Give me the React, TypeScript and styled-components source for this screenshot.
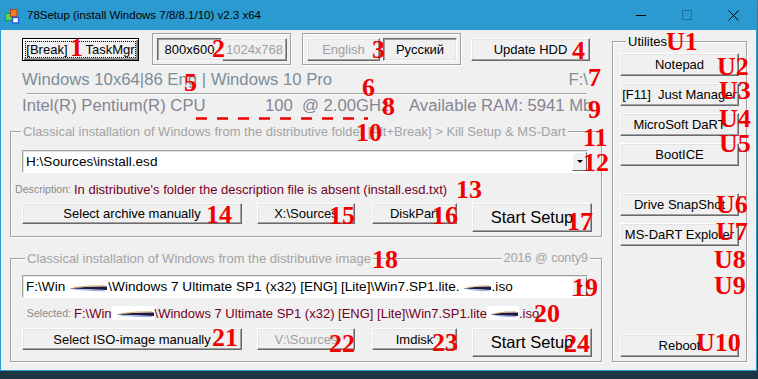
import React from 'react';
import styled, { createGlobalStyle, css } from 'styled-components';

const UI_FONT = `"Liberation Sans", Arial, sans-serif`;

const GlobalStyle = createGlobalStyle`
  html, body { margin: 0; padding: 0; }
  body {
    width: 758px;
    height: 379px;
    overflow: hidden;
    background: linear-gradient(180deg, #4a7890 0%, #1d3442 100%);
    font-family: ${UI_FONT};
  }
`;

const Screen = styled.div`
  position: relative;
  width: 758px;
  height: 379px;
`;

const Window = styled.div`
  width: 757px;
  height: 371px;
  box-sizing: border-box;
  border: 1px solid #2b9ad0;
  border-top: 0;
  background: #f0f0f0;
  display: flex;
  flex-direction: column;
`;

const TitleBar = styled.div`
  flex: none;
  height: 30px;
  display: flex;
  align-items: center;
  background: #2b9ad0;
`;

const AppIcon = styled.svg`
  flex: none;
  margin-left: 3px;
  margin-top: 1px;
`;

const TitleText = styled.div`
  flex: 1;
  margin-left: 7px;
  font-size: 11.5px;
  color: #000;
  white-space: nowrap;
`;

const CaptionButton = styled.div`
  flex: none;
  width: 46px;
  height: 30px;
  display: flex;
  align-items: center;
  justify-content: center;
`;

const Client = styled.div`
  flex: 1;
  display: flex;
  padding-left: 9px;
`;

const LeftCol = styled.div`
  width: 593px;
  display: flex;
  flex-direction: column;
`;

const RightCol = styled.div`
  width: 136px;
  margin-left: 9px;
  margin-top: 4px;
`;

const TopRow = styled.div`
  margin-top: 3px;
  height: 32px;
  padding-left: 12px;
  display: flex;
  align-items: center;
`;

const Cluster = styled.div<{ $ml: number; $gap: number }>`
  box-sizing: border-box;
  height: 32px;
  margin-left: ${p => p.$ml}px;
  padding: 0 3px 0 4px;
  display: flex;
  align-items: center;
  gap: ${p => p.$gap}px;
  border: 1px solid #a0a0a0;
  box-shadow: inset 1px 1px 0 #fff, 1px 1px 0 #fff;
`;

type Kind = 'normal' | 'default' | 'pressed' | 'disabled';

const kindStyles: Record<Kind, ReturnType<typeof css>> = {
  normal: css`
    border-color: #fff #696969 #696969 #fff;
    box-shadow: inset -1px -1px 0 #a0a0a0, inset 1px 1px 0 #e3e3e3;
  `,
  disabled: css`
    color: #a0a0a0;
    border-color: #fff #696969 #696969 #fff;
    box-shadow: inset -1px -1px 0 #a0a0a0, inset 1px 1px 0 #e3e3e3;
  `,
  pressed: css`
    border-color: #696969 #fff #fff #696969;
    box-shadow: inset 1px 1px 0 #a0a0a0, inset -1px -1px 0 #e3e3e3;
  `,
  default: css`
    border-color: #000;
    box-shadow: inset 1px 1px 0 #fff, inset -1px -1px 0 #696969, inset -2px -2px 0 #a0a0a0;
  `,
};

const Button = styled.button<{ $w: number; $h?: number; $kind?: Kind; $big?: boolean; $ml?: number; $mt?: number }>`
  box-sizing: border-box;
  flex: none;
  width: ${p => p.$w}px;
  height: ${p => p.$h ?? 23}px;
  margin: ${p => p.$mt ?? 0}px 0 0 ${p => p.$ml ?? 0}px;
  padding: 0;
  display: flex;
  align-items: center;
  justify-content: center;
  font-family: ${UI_FONT};
  font-size: ${p => (p.$big ? 16.5 : 13)}px;
  white-space: nowrap;
  background: #f0f0f0;
  color: #000;
  border: 1px solid;
  ${p => kindStyles[p.$kind ?? 'normal']}
`;

const FocusRing = styled.span`
  align-self: stretch;
  flex: 1;
  margin: 2px;
  border: 1px dotted #000;
  display: flex;
  align-items: center;
  justify-content: center;
`;

const InfoRow = styled.div`
  margin-top: 5px;
  height: 20px;
  padding: 0 15px 0 12px;
  display: flex;
  justify-content: space-between;
  align-items: center;
  font-size: 16.7px;
  color: #7b8e99;
  white-space: nowrap;
`;

const Separator = styled.div`
  margin: 3px 0 0 17px;
  width: 559px;
  height: 0;
  border-top: 1px solid #a0a0a0;
  border-bottom: 1px solid #fff;
`;

const CpuRow = styled.div`
  margin-top: 1px;
  height: 20px;
  padding-left: 12px;
  display: grid;
  grid-template-columns: 243px 37px 107px auto;
  align-items: center;
  font-size: 16.7px;
  color: #878591;
  white-space: nowrap;
`;

const Group = styled.fieldset<{ $mt: number; $pb: number }>`
  box-sizing: border-box;
  width: 592px;
  min-width: 0;
  margin: ${p => p.$mt}px 0 0 0;
  padding: 0 0 ${p => p.$pb}px 0;
  border: 1px solid #a0a0a0;
  box-shadow: inset 1px 1px 0 #fff, 1px 1px 0 #fff;
`;

const SideGroup = styled(Group)`
  width: 135px;
  padding: 0 0 4px 7px;
`;

const Legend = styled.legend<{ $ml: number; $dark?: boolean }>`
  margin-left: ${p => p.$ml}px;
  padding: 0 2px;
  height: 15px;
  line-height: 15px;
  font-size: 13px;
  color: ${p => (p.$dark ? '#000' : '#a3a3a3')};
  background: #f0f0f0;
  white-space: nowrap;
`;

const WideLegend = styled.legend`
  margin-left: 14px;
  padding: 0;
  width: 565px;
  height: 15px;
  display: flex;
  background: #f0f0f0;
`;

const LegendText = styled.span<{ $size: number }>`
  padding: 0 2px;
  line-height: 15px;
  font-size: ${p => p.$size}px;
  color: #a3a3a3;
  white-space: nowrap;
`;

const LegendRule = styled.span`
  flex: 1;
  margin-top: 7px;
  height: 0;
  border-top: 1px solid #a0a0a0;
  border-bottom: 1px solid #fff;
`;

const Combo = styled.div<{ $mt: number }>`
  box-sizing: border-box;
  margin: ${p => p.$mt}px 0 0 11px;
  width: 566px;
  height: 23px;
  display: flex;
  align-items: center;
  background: #fff;
  border: 1px solid;
  border-color: #a0a0a0 #fff #fff #a0a0a0;
  box-shadow: inset 1px 1px 0 #e3e3e3;
`;

const ComboText = styled.div`
  flex: 1;
  padding-left: 3px;
  display: flex;
  align-items: center;
  font-size: 13.6px;
  color: #000;
  white-space: nowrap;
  overflow: hidden;
`;

const DropButton = styled.div`
  flex: none;
  box-sizing: border-box;
  width: 15px;
  height: 19px;
  display: flex;
  align-items: center;
  justify-content: center;
  background: #f0f0f0;
  border: 1px solid;
  border-color: #fff #696969 #696969 #fff;
`;

const Arrow = styled.span`
  width: 0;
  height: 0;
  border-left: 3px solid transparent;
  border-right: 3px solid transparent;
  border-top: 3px solid #000;
`;

const NoteRow = styled.div<{ $mt: number }>`
  margin-top: ${p => p.$mt}px;
  height: 16px;
  display: flex;
  align-items: center;
  gap: 3px;
  white-space: nowrap;
`;

const NoteLabel = styled.span`
  width: 60px;
  text-align: right;
  font-size: 10.6px;
  color: #8a8a8a;
`;

const NoteValue = styled.span`
  display: flex;
  align-items: center;
  font-size: 13px;
  color: #74001f;
`;

const ButtonRow = styled.div<{ $mt: number }>`
  margin: ${p => p.$mt}px 0 0 11px;
  display: flex;
  align-items: flex-start;
`;

const SmudgeSvg = styled.svg`
  flex: none;
  display: block;
`;

const Overlay = styled.div`
  position: absolute;
  inset: 0;
  pointer-events: none;
`;

const Mark = styled.span<{ $x: number; $y: number }>`
  position: absolute;
  left: ${p => p.$x - 1}px;
  top: ${p => p.$y - 4}px;
  font-family: "Liberation Serif", "Times New Roman", serif;
  font-weight: bold;
  font-size: 26px;
  line-height: 1;
  color: #f00000;
  white-space: nowrap;
`;

const DashLine = styled.svg`
  position: absolute;
  left: 196px;
  top: 116px;
`;

const marks: [string, number, number][] = [
  ['1', 71, 39], ['2', 213, 40], ['3', 373, 41], ['4', 573, 42],
  ['5', 185, 74], ['6', 363, 79], ['7', 589, 69], ['8', 383, 98], ['9', 589, 101],
  ['10', 357, 124], ['11', 584, 129], ['12', 584, 154], ['13', 457, 181],
  ['14', 207, 206], ['15', 330, 207], ['16', 433, 207], ['17', 568, 213],
  ['18', 373, 251], ['19', 573, 279], ['20', 535, 305], ['21', 213, 329],
  ['22', 330, 335], ['23', 433, 334], ['24', 565, 335],
  ['U1', 667, 33], ['U2', 718, 58], ['U3', 720, 82], ['U4', 720, 110], ['U5', 720, 135],
  ['U6', 717, 196], ['U7', 717, 223], ['U8', 715, 251], ['U9', 715, 277], ['U10', 697, 334],
];

function Smudge({ w }: { w: number }) {
  const s = Math.round(w * 0.12);
  return (
    <SmudgeSvg width={w} height={14} viewBox={`0 0 ${w} 14`}>
      <rect width={w} height={14} fill="#fff" />
      <path d={`M${s} 8.2 Q ${w * 0.55} 6.2 ${w - 1} 6.6 L ${w - 1} 10 Q ${w * 0.55} 9.6 ${s} 8.6 Z`} fill="#1b1b48" />
      <path d={`M${s + 4} 7.6 Q ${w * 0.55} 5.4 ${w - 3} 5.8`} stroke="#d08a3a" strokeWidth="0.9" fill="none" opacity="0.8" />
      <path d={`M${s + 4} 9.2 Q ${w * 0.55} 10.6 ${w - 3} 10.8`} stroke="#5f8fd8" strokeWidth="0.9" fill="none" opacity="0.8" />
    </SmudgeSvg>
  );
}

function TitleIcon() {
  return (
    <AppIcon width="16" height="16" viewBox="0 0 16 16">
      <rect x="1.5" y="5.5" width="6.5" height="7" fill="#5fd35f" stroke="#1f9a2a" />
      <rect x="6.5" y="1.5" width="6.5" height="7" fill="#f07a28" stroke="#a8481a" />
      <rect x="8.5" y="9.5" width="6" height="5.5" fill="#fff" stroke="#1f5fe0" strokeWidth="1.4" />
    </AppIcon>
  );
}

function Caption() {
  return (
    <TitleBar>
      <TitleIcon />
      <TitleText>78Setup (install Windows 7/8/8.1/10) v2.3 x64</TitleText>
      <CaptionButton>
        <svg width="10" height="10" viewBox="0 0 10 10">
          <line x1="0" y1="5.5" x2="10" y2="5.5" stroke="#000" strokeWidth="1" />
        </svg>
      </CaptionButton>
      <CaptionButton>
        <svg width="10" height="10" viewBox="0 0 10 10">
          <rect x="0.5" y="0.5" width="9" height="9" fill="none" stroke="#1d6f9c" strokeWidth="1" />
        </svg>
      </CaptionButton>
      <CaptionButton>
        <svg width="11" height="11" viewBox="0 0 11 11">
          <path d="M0.5 0.5 L10.5 10.5 M10.5 0.5 L0.5 10.5" stroke="#000" strokeWidth="1" />
        </svg>
      </CaptionButton>
    </TitleBar>
  );
}

export default function App() {
  return (
    <Screen>
      <GlobalStyle />
      <Window>
        <Caption />
        <Client>
          <LeftCol>
            <TopRow>
              <Button $w={117} $kind="default">
                <FocusRing>[Break]{'\u00a0'.repeat(5)}TaskMgr</FocusRing>
              </Button>
              <Cluster $ml={13} $gap={0}>
                <Button $w={65} $kind="pressed">800x600</Button>
                <Button $w={65} $kind="disabled">1024x768</Button>
              </Cluster>
              <Cluster $ml={11} $gap={3}>
                <Button $w={73} $kind="disabled">English</Button>
                <Button $w={74} $kind="pressed">Русский</Button>
              </Cluster>
              <Button $w={119} $ml={10}>Update HDD</Button>
            </TopRow>

            <InfoRow>
              <span>Windows 10x64|86 Eng | Windows 10 Pro</span>
              <span>F:\</span>
            </InfoRow>
            <Separator />
            <CpuRow>
              <span>Intel(R) Pentium(R) CPU</span>
              <span>100</span>
              <span>@ 2.00GHz</span>
              <span>Available RAM: 5941 Mb</span>
            </CpuRow>

            <Group $mt={8} $pb={4}>
              <Legend $ml={10}>
                Classical installation of Windows from the distributive folder [Alt+Break] &gt; Kill Setup &amp; MS-Dart
              </Legend>
              <Combo $mt={11}>
                <ComboText>H:\Sources\install.esd</ComboText>
                <DropButton><Arrow /></DropButton>
              </Combo>
              <NoteRow $mt={8}>
                <NoteLabel>Description:</NoteLabel>
                <NoteValue>In distributive's folder the description file is absent (install.esd.txt)</NoteValue>
              </NoteRow>
              <ButtonRow $mt={6}>
                <Button $w={220} $h={21}>Select archive manually</Button>
                <Button $w={98} $h={21} $ml={15}>X:\Sources</Button>
                <Button $w={85} $h={21} $ml={17}>DiskPart</Button>
                <Button $w={120} $h={29} $ml={15} $big>Start Setup</Button>
              </ButtonRow>
            </Group>

            <Group $mt={14} $pb={4}>
              <WideLegend>
                <LegendText $size={13}>Classical installation of Windows from the distributive image</LegendText>
                <LegendRule />
                <LegendText $size={12.5}>2016 @ conty9</LegendText>
              </WideLegend>
              <Combo $mt={9}>
                <ComboText>
                  F:\Win<Smudge w={43} />\Windows 7 Ultimate SP1 (x32) [ENG] [Lite]\Win7.SP1.lite.<Smudge w={32} />.iso
                </ComboText>
                <DropButton><Arrow /></DropButton>
              </Combo>
              <NoteRow $mt={7}>
                <NoteLabel>Selected:</NoteLabel>
                <NoteValue>
                  F:\Win<Smudge w={43} />\Windows 7 Ultimate SP1 (x32) [ENG] [Lite]\Win7.SP1.lite<Smudge w={32} />.iso
                </NoteValue>
              </NoteRow>
              <ButtonRow $mt={7}>
                <Button $w={220} $h={22}>Select ISO-image manually</Button>
                <Button $w={98} $h={22} $ml={15} $kind="disabled">V:\Sources</Button>
                <Button $w={85} $h={22} $ml={17}>Imdisk</Button>
                <Button $w={120} $h={29} $ml={15} $big>Start Setup</Button>
              </ButtonRow>
            </Group>
          </LeftCol>

          <RightCol>
            <SideGroup $mt={0} $pb={4}>
              <Legend $ml={6} $dark>Utilites</Legend>
              <Button $w={119} $mt={4}>Notepad</Button>
              <Button $w={119} $mt={7}>[F11]{'\u00a0\u00a0'}Just Manager</Button>
              <Button $w={119} $mt={7}>MicroSoft DaRT</Button>
              <Button $w={119} $mt={7}>BootICE</Button>
              <Button $w={119} $mt={27}>Drive SnapShot</Button>
              <Button $w={119} $mt={7}>MS-DaRT Explorer</Button>
              <Button $w={119} $mt={88}>Reboot</Button>
            </SideGroup>
          </RightCol>
        </Client>
      </Window>

      <Overlay>
        <DashLine width="172" height="6" viewBox="0 0 172 6">
          <line x1="0" y1="2.5" x2="172" y2="2.5" stroke="#f00000" strokeWidth="2.5" strokeDasharray="11 10" />
        </DashLine>
        {marks.map(([t, x, y]) => (
          <Mark key={t} $x={x} $y={y}>{t}</Mark>
        ))}
      </Overlay>
    </Screen>
  );
}
